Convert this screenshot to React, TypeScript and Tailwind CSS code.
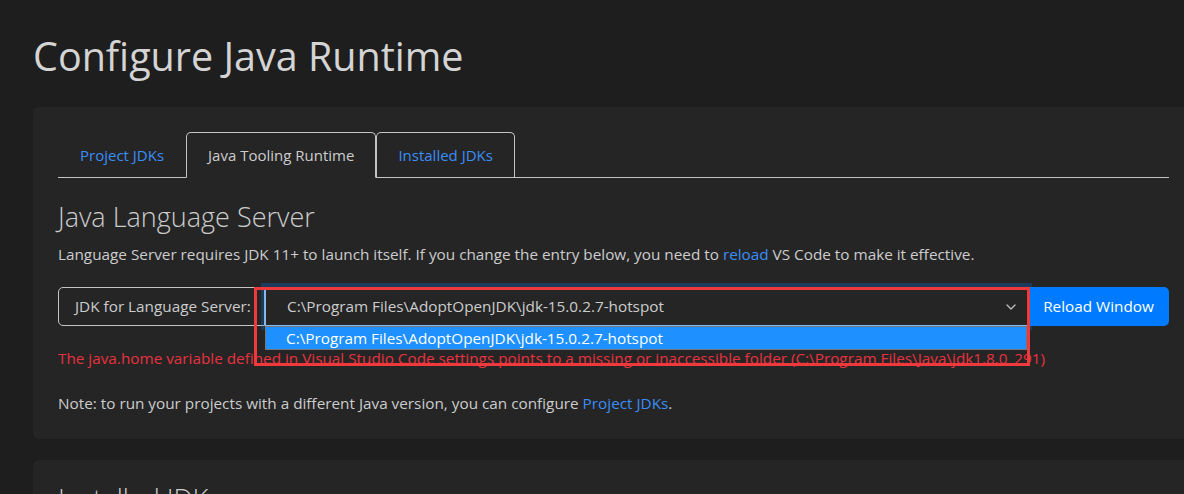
import { ChevronDown } from 'lucide-react';

const font = { fontFamily: '"Open Sans", "Noto Sans", sans-serif' };

function Tab({ label, active, bordered }: { label: string; active?: boolean; bordered?: boolean }) {
  return (
    <div
      className={`h-[46px] px-[21px] flex items-center text-[15px] -mb-px rounded-t-[5px] border ${
        active
          ? 'border-[#c4c4c4] border-b-[#252526] bg-[#252526] text-[#cccccc]'
          : bordered
            ? 'border-[#c4c4c4] border-b-transparent text-[#3a8ef6]'
            : 'border-transparent text-[#3a8ef6]'
      }`}
    >
      {label}
    </div>
  );
}

export default function App() {
  return (
    <div className="min-h-screen bg-[#1e1e1e] pl-[33px] pb-10 overflow-hidden text-[#cccccc]" style={font}>
      <h1 className="pt-[32px] h-[107px] text-[39.5px] leading-[48px] font-medium text-[#d4d4d4]">Configure Java Runtime</h1>

      {/* carte principale */}
      <div className="w-[1161px] rounded-[6px] bg-[#252526] px-[25px] pt-[25px] pb-[25px]">
        <div className="flex border-b border-[#c4c4c4] w-[1111px]">
          <Tab label="Project JDKs" />
          <Tab label="Java Tooling Runtime" active />
          <Tab label="Installed JDKs" bordered />
        </div>

        <h3 className="mt-[22px] text-[27px] leading-[34px] font-light text-[#cccccc]">Java Language Server</h3>
        <p className="mt-[9px] text-[15.3px] leading-[22px]">
          Language Server requires JDK 11+ to launch itself. If you change the entry below, you need to{' '}
          <span className="text-[#3a8ef6]">reload</span> VS Code to make it effective.
        </p>

        <div className="relative mt-[22px] flex h-[39px] w-[1111px]">
          <div className="w-[207px] shrink-0 flex items-center pl-[16px] border border-[#c4c4c4] rounded-l-[5px] text-[15.3px]">
            JDK for Language Server:
          </div>
          <div className="w-[763px] shrink-0 flex items-center justify-between pl-[21px] pr-[8px] border border-[#80bdff] bg-[#252526] shadow-[0_0_0_4px_rgba(0,123,255,0.25)] text-[15.3px]">
            <span>C:\Program Files\AdoptOpenJDK\jdk-15.0.2.7-hotspot</span>
            <ChevronDown size={16} strokeWidth={2} className="text-[#bbbbbb]" />
          </div>
          <button className="flex-1 bg-[#007bff] text-white text-[15.3px] rounded-r-[5px]">Reload Window</button>

          {/* liste déroulante ouverte */}
          <div className="absolute left-[207px] top-[39px] w-[762px] h-[24px] bg-[#1e90ff] border border-[#767676] flex items-center pl-[20px] text-[15.3px] text-white">
            C:\Program Files\AdoptOpenJDK\jdk-15.0.2.7-hotspot
          </div>
          {/* cadre d'annotation */}
          <div className="absolute left-[196px] top-0 w-[776px] h-[79px] border-[3px] border-[#f0393c] pointer-events-none" />
        </div>

        <p className="mt-[21px] text-[15.3px] leading-[22px] text-[#e8323f] whitespace-nowrap">
          The java.home variable defined in Visual Studio Code settings points to a missing or inaccessible folder (C:\Program Files\Java\jdk1.8.0_291)
        </p>
        <p className="mt-[23px] text-[15.3px] leading-[22px]">
          Note: to run your projects with a different Java version, you can configure{' '}
          <span className="text-[#3a8ef6]">Project JDKs</span>.
        </p>
      </div>

      <div className="mt-[21px] w-[1161px] h-[200px] rounded-[6px] bg-[#252526] px-[25px] pt-[22px]">
        <h3 className="text-[27px] leading-[34px] font-light">Installed JDKs</h3>
      </div>
    </div>
  );
}
